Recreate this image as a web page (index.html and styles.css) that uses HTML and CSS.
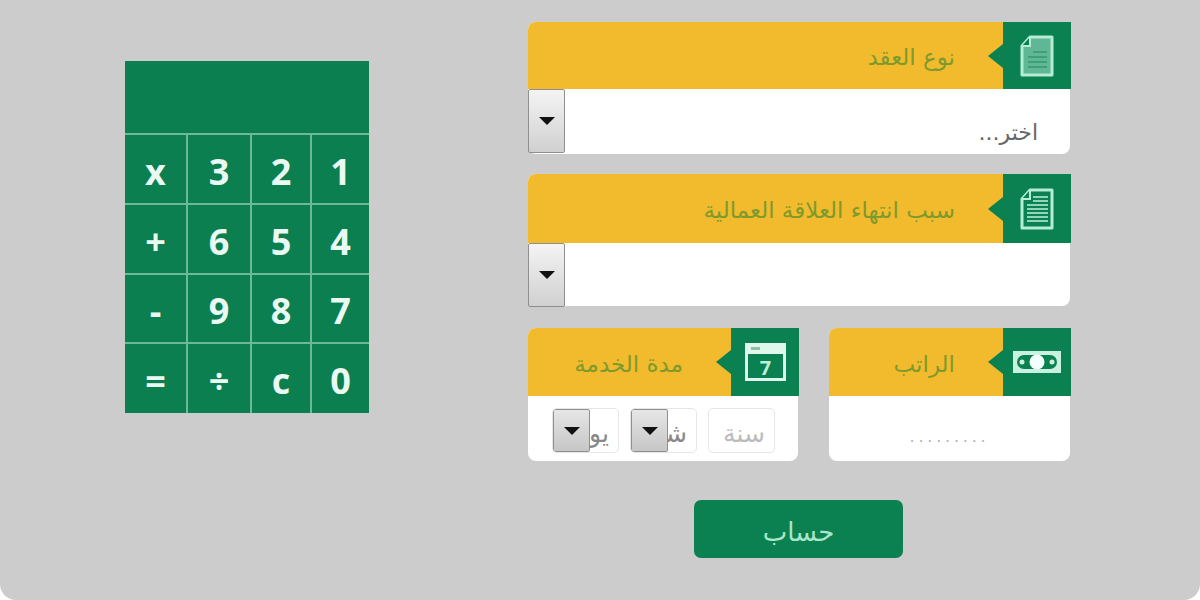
FILE: index.html
```html
<!DOCTYPE html>
<html lang="ar">
<head>
  <meta charset="UTF-8" />
  <meta name="viewport" content="width=device-width, initial-scale=1" />
  <title>حساب نهاية الخدمة</title>
  <link rel="stylesheet" href="styles.css">
</head>
<body>
  <div class="page">
    <div class="calc" dir="rtl">
      <div class="calc-display"></div>
      <button class="key">1</button>
      <button class="key">2</button>
      <button class="key">3</button>
      <button class="key">x</button>
      <button class="key">4</button>
      <button class="key">5</button>
      <button class="key">6</button>
      <button class="key">+</button>
      <button class="key">7</button>
      <button class="key">8</button>
      <button class="key">9</button>
      <button class="key">-</button>
      <button class="key">0</button>
      <button class="key">c</button>
      <button class="key">÷</button>
      <button class="key">=</button>
    </div>

    <form class="form" dir="rtl">
      <div class="card">
        <div class="card-head">
          <div class="card-icon">
            <svg width="36" height="42" viewBox="0 0 36 42">
              <path d="M11 2H33V40H3V11Z" fill="#5fb795" stroke="#b5ecd4" stroke-width="3" stroke-linejoin="round"/>
              <path d="M11 2V11H3" fill="#0b8050" stroke="#b5ecd4" stroke-width="2"/>
              <path d="M14 17H28M9 22H28M9 27H28M9 32H28" stroke="#3f9f78" stroke-width="2"/>
            </svg>
          </div>
          <label class="card-label">نوع العقد</label>
        </div>
        <div class="card-body select-body">
          <span class="select-text">اختر...</span>
          <span class="select-btn"></span>
        </div>
      </div>

      <div class="card">
        <div class="card-head head-tall">
          <div class="card-icon">
            <svg width="36" height="42" viewBox="0 0 36 42">
              <path d="M11 2H33V40H3V11Z" fill="#0b8050" stroke="#b5ecd4" stroke-width="3" stroke-linejoin="round"/>
              <path d="M11 2V11H3" fill="#0b8050" stroke="#b5ecd4" stroke-width="2"/>
              <path d="M14 9H29M14 13H29M8 17H29M8 21H29M8 25H29M8 29H29M8 33H29" stroke="#8fd6b8" stroke-width="2"/>
            </svg>
          </div>
          <label class="card-label">سبب انتهاء العلاقة العمالية</label>
        </div>
        <div class="card-body select-body body-short">
          <span class="select-btn"></span>
        </div>
      </div>

      <div class="card-row">
        <div class="card salary">
          <div class="card-head">
            <div class="card-icon">
              <svg width="48" height="22" viewBox="0 0 48 22">
                <rect width="48" height="22" fill="#c9f1e0"/>
                <rect x="4" y="4" width="40" height="14" rx="7" fill="#0b8050"/>
                <circle cx="24" cy="11" r="7.5" fill="#f2fffa"/>
                <circle cx="9" cy="11" r="2.5" fill="#c9f1e0"/>
                <circle cx="39" cy="11" r="2.5" fill="#c9f1e0"/>
              </svg>
            </div>
            <label class="card-label">الراتب</label>
          </div>
          <div class="card-body salary-body">.........</div>
        </div>

        <div class="card period">
          <div class="card-head">
            <div class="card-icon">
              <svg width="41" height="38" viewBox="0 0 41 38">
                <rect width="41" height="38" fill="#dff7ec"/>
                <rect x="3" y="11" width="35" height="24" fill="#0b8050"/>
                <rect x="6" y="4" width="9" height="3" fill="#8fbfa8"/>
                <text class="calendar-day" x="20.5" y="32" text-anchor="middle">7</text>
              </svg>
            </div>
            <label class="card-label">مدة الخدمة</label>
          </div>
          <div class="card-body period-body">
            <div class="mini-box">سنة</div>
            <div class="mini-box has-btn">شهر<span class="select-btn mini-btn"></span></div>
            <div class="mini-box has-btn">يوم<span class="select-btn mini-btn"></span></div>
          </div>
        </div>
      </div>

      <button type="button" class="submit">حساب</button>
    </form>
  </div>
</body>
</html>
```

FILE: styles.css
```css
body {
  margin: 0;
  background: #fff;
  font-family: "DejaVu Sans", sans-serif;
}

.page {
  display: flex;
  align-items: flex-start;
  height: 600px;
  overflow: hidden;
  background: #ccc;
  border-radius: 0 0 16px 16px;
}

/* calculator */
.calc {
  display: grid;
  grid-template-columns: 57px 58px 62px 61px;
  grid-template-rows: 72px 68px 68px 67px 69px;
  gap: 2px;
  width: 244px;
  margin: 61px 0 0 125px;
  background: #6fb896;
}

.calc-display {
  grid-column: 1 / -1;
  background: #0b7f4f;
}

.key {
  padding: 4px 0 0;
  border: none;
  background: #0b7f4f;
  color: #eafaf3;
  font-family: "Open Sans", sans-serif;
  font-size: 36px;
  font-weight: 700;
  cursor: pointer;
}

/* form */
.form {
  width: 542px;
  margin: 22px 0 0 159px;
}

.card {
  margin-bottom: 20px;
  background: #fff;
  border-radius: 8px;
}

.card-head {
  display: flex;
  height: 67px;
  margin-right: -1px;
  background: #f2bb2d;
  border-radius: 8px 0 0 0;
}

.head-tall {
  height: 69px;
}

.card-icon {
  position: relative;
  display: flex;
  flex-shrink: 0;
  align-items: center;
  justify-content: center;
  width: 68px;
  background: #0b8050;
}

.card-icon::after {
  content: "";
  position: absolute;
  top: 50%;
  right: 100%;
  margin-top: -12px;
  border: 12px solid transparent;
  border-left: none;
  border-right: 15px solid #0b8050;
}

.card-label {
  margin-right: 48px;
  align-self: center;
  padding-top: 3px;
  color: #7f9a2c;
  font-size: 23px;
}

.card-body {
  display: flex;
  border-radius: 0 0 8px 8px;
}

.select-body {
  justify-content: space-between;
  height: 65px;
}

.body-short {
  height: 63px;
}

.select-text {
  margin: 31px 32px 0 0;
  color: #666;
  font-size: 22px;
}

.select-btn {
  position: relative;
  flex-shrink: 0;
  box-sizing: border-box;
  width: 37px;
  height: 64px;
  margin-right: auto;
  border: 1px solid #8f8f8f;
  border-radius: 2px;
  background: linear-gradient(#f4f4f4, #d0d0d0);
}

.select-btn::after {
  content: "";
  position: absolute;
  top: 50%;
  left: 50%;
  margin: -4px 0 0 -8px;
  border: 8px solid transparent;
  border-bottom: none;
  border-top: 8px solid #111;
}

.card-row {
  display: flex;
  justify-content: space-between;
  margin-top: 22px;
}

.salary {
  width: 241px;
}

.period {
  width: 270px;
}

.salary .card-head,
.period .card-head {
  height: 68px;
  border-radius: 8px 0 0 0;
}

.salary-body {
  justify-content: center;
  height: 65px;
  color: #b4b4b4;
  font-size: 16px;
  letter-spacing: 3.8px;
  line-height: 82px;
}

.period-body {
  gap: 11px;
  height: 65px;
  padding: 12px 23px 0 0;
  box-sizing: border-box;
}

.mini-box {
  position: relative;
  box-sizing: border-box;
  width: 67px;
  height: 45px;
  overflow: hidden;
  border: 1px solid #e6e6ea;
  border-radius: 5px;
  padding-right: 9px;
  color: #bbb;
  font-size: 25px;
  line-height: 50px;
}

.has-btn {
  color: #888;
}

.mini-btn {
  position: absolute;
  top: 0;
  left: 0;
  width: 37px;
  height: 100%;
  background: linear-gradient(#e6e6e6, #c6c6c6);
}

.calendar-day {
  fill: #bff0da;
  font-family: "Open Sans", sans-serif;
  font-size: 20px;
  font-weight: 700;
}

.submit {
  display: block;
  width: 209px;
  height: 58px;
  margin: 19px 167px 0 0;
  padding-top: 6px;
  border: none;
  border-radius: 7px;
  background: #0b8050;
  color: #a8e6cb;
  font-family: "DejaVu Sans", sans-serif;
  font-size: 26px;
  cursor: pointer;
}
```
